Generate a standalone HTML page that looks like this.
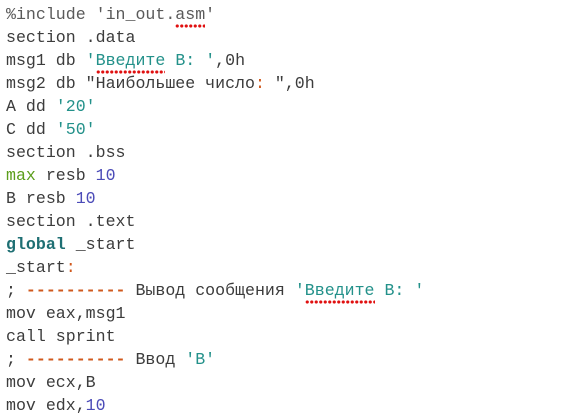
<!DOCTYPE html>
<html><head><meta charset="utf-8"><style>
html,body{margin:0;padding:0;background:#fff;width:585px;height:415px;overflow:hidden}
pre{margin:0;position:absolute;left:6px;top:3px;font-family:"Liberation Mono","DejaVu Sans Mono",monospace;font-size:16.6px;line-height:23px;color:#3c3c3c}
.s{color:#23918a}.o{color:#d0581c}.n{color:#4b4bb8}.g{color:#5c9e1c}.b{color:#1e6f73;font-weight:bold}.p{color:#5a5a5a}
.u{position:relative}
.u::after{content:"";position:absolute;left:0;right:0;top:100%;margin-top:0px;height:4px;background-image:radial-gradient(circle,#e01010 1.4px,transparent 1.8px);background-size:4.5px 4px;background-repeat:repeat-x}
</style></head><body><pre><span class="p">%include 'in_out.<span class="u">asm</span>'</span>
section .data
msg1 db <span class="s">'<span class="u">Введите</span> B: '</span>,0h
msg2 db "Наибольшее число<span class="o">:</span> ",0h
A dd <span class="s">'20'</span>
C dd <span class="s">'50'</span>
section .bss
<span class="g">max</span> resb <span class="n">10</span>
B resb <span class="n">10</span>
section .text
<span class="b">global</span> _start
_start<span class="o">:</span>
; <span class="o"><b>----------</b></span> Вывод сообщения <span class="s">'<span class="u">Введите</span> B: '</span>
mov eax,msg1
call sprint
; <span class="o"><b>----------</b></span> Ввод <span class="s">'B'</span>
mov ecx,B
mov edx,<span class="n">10</span></pre></body></html>
